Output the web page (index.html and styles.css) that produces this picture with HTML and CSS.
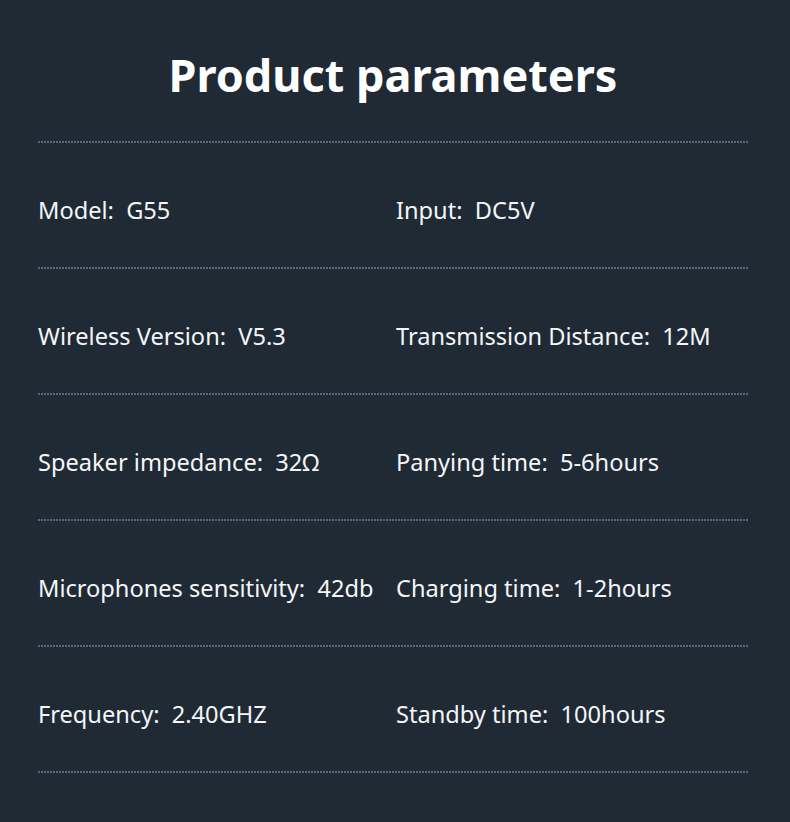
FILE: index.html
```html
<html>
<head>
    <link rel="stylesheet" href="styles.css">
</head>
<body>
    <div class="params">
        <h1>Product parameters</h1>

        <div class="rule"></div>
        <div class="row">
            <div class="cell">Model:&nbsp; G55</div>
            <div class="cell">Input:&nbsp; DC5V</div>
        </div>
        <div class="rule"></div>
        <div class="row">
            <div class="cell">Wireless Version:&nbsp; V5.3</div>
            <div class="cell">Transmission Distance:&nbsp; 12M</div>
        </div>
        <div class="rule"></div>
        <div class="row">
            <div class="cell">Speaker impedance:&nbsp; 32Ω</div>
            <div class="cell">Panying time:&nbsp; 5-6hours</div>
        </div>
        <div class="rule"></div>
        <div class="row">
            <div class="cell">Microphones sensitivity:&nbsp; 42db</div>
            <div class="cell">Charging time:&nbsp; 1-2hours</div>
        </div>
        <div class="rule"></div>
        <div class="row">
            <div class="cell">Frequency:&nbsp; 2.40GHZ</div>
            <div class="cell">Standby time:&nbsp; 100hours</div>
        </div>
        <div class="rule"></div>
    </div>
</body>
</html>
```

FILE: styles.css
```css
html, body {
    margin: 0;
    padding: 0;
    background: #1f2a35;
}

.params {
    width: 790px;
    height: 822px;
    padding: 0 42px 0 38px;
    box-sizing: border-box;
    font-family: "Noto Sans", "Open Sans", sans-serif;
    color: #f4f6f8;
}

.params h1 {
    margin: 0;
    padding-top: 52px;
    height: 141px;
    box-sizing: border-box;
    text-align: center;
    font-size: 45px;
    font-weight: bold;
    line-height: 1;
    color: #ffffff;
}

.rule {
    height: 2px;
    background-image: repeating-linear-gradient(90deg, #52697c 0 1.5px, transparent 1.5px 3px);
}

.row {
    display: grid;
    grid-template-columns: 358px 1fr;
    align-items: center;
    height: 124px;
    padding-top: 10px;
    box-sizing: border-box;
}

.cell {
    font-size: 23.6px;
    white-space: nowrap;
}
```
